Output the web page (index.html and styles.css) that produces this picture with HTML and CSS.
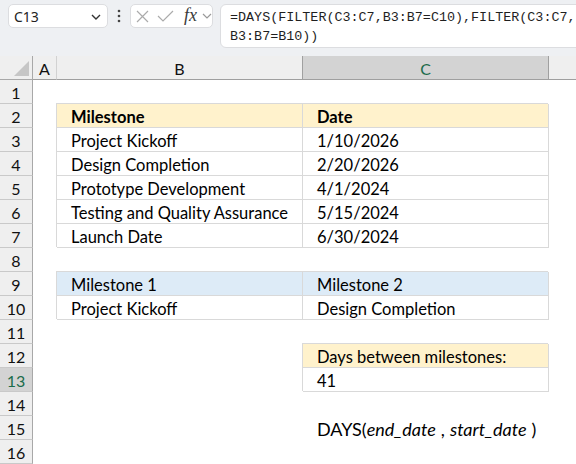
FILE: index.html
```html
<!DOCTYPE html>
<html>
<head>
<meta charset="utf-8">
<link rel="stylesheet" href="styles.css">
</head>
<body>
<div class="topbar">
  <div class="namebox">
    <span class="nb-text">C13</span>
    <svg class="chev" width="10" height="6" viewBox="0 0 10 6"><path d="M1 1 L5 5 L9 1" fill="none" stroke="#333" stroke-width="1.4"/></svg>
  </div>
  <div class="dots">
    <svg width="4" height="14" viewBox="0 0 4 14"><circle cx="2" cy="2" r="1.3" fill="#444"/><circle cx="2" cy="7" r="1.3" fill="#444"/><circle cx="2" cy="12" r="1.3" fill="#444"/></svg>
  </div>
  <div class="fxbox">
    <svg class="ic-x" width="13" height="13" viewBox="0 0 13 13"><path d="M1 1 L12 12 M12 1 L1 12" fill="none" stroke="#ababab" stroke-width="1.2"/></svg>
    <svg class="ic-check" width="17" height="12" viewBox="0 0 17 12"><path d="M1 6 L6 11 L16 1" fill="none" stroke="#ababab" stroke-width="1.2"/></svg>
    <span class="fx">fx</span>
    <svg class="chev2" width="10" height="6" viewBox="0 0 10 6"><path d="M1 1 L5 5 L9 1" fill="none" stroke="#9a9a9a" stroke-width="1.2"/></svg>
  </div>
  <div class="formula">=DAYS(FILTER(C3:C7,B3:B7=C10),FILTER(C3:C7,<br>B3:B7=B10))</div>
</div>

<div class="sheet">
  <div class="corner"><span class="tri"></span></div>
  <div class="ch">A</div>
  <div class="ch">B</div>
  <div class="ch sel">C</div>
  <div class="ch last"></div>

  <div class="rh">1</div><div></div><div></div><div></div><div></div>

  <div class="rh">2</div><div></div><div class="t y bold">Milestone</div><div class="t y bold">Date</div><div></div>
  <div class="rh">3</div><div></div><div class="t">Project Kickoff</div><div class="t">1/10/2026</div><div></div>
  <div class="rh">4</div><div></div><div class="t">Design Completion</div><div class="t">2/20/2026</div><div></div>
  <div class="rh">5</div><div></div><div class="t">Prototype Development</div><div class="t">4/1/2024</div><div></div>
  <div class="rh">6</div><div></div><div class="t">Testing and Quality Assurance</div><div class="t">5/15/2024</div><div></div>
  <div class="rh">7</div><div></div><div class="t">Launch Date</div><div class="t">6/30/2024</div><div></div>

  <div class="rh">8</div><div></div><div></div><div></div><div></div>

  <div class="rh">9</div><div></div><div class="t b">Milestone 1</div><div class="t b">Milestone 2</div><div></div>
  <div class="rh">10</div><div></div><div class="t">Project Kickoff</div><div class="t">Design Completion</div><div></div>

  <div class="rh">11</div><div></div><div></div><div></div><div></div>

  <div class="rh">12</div><div></div><div></div><div class="t y">Days between milestones:</div><div></div>
  <div class="rh sel">13</div><div></div><div></div><div class="t">41</div><div></div>

  <div class="rh">14</div><div></div><div></div><div></div><div></div>
  <div class="rh">15</div><div></div><div></div><div class="c syn">DAYS(<i>end_date</i><span class="sp">,</span><i>start_date</i><span class="sp">)</span></div><div></div>
  <div class="rh">16</div><div></div><div></div><div></div><div></div>
</div>
</body>
</html>
```
FILE: styles.css
```css
html, body {
  margin: 0;
  padding: 0;
  background: #ffffff;
}
body {
  width: 576px;
  height: 464px;
  overflow: hidden;
  font-family: Lato, "Liberation Sans", sans-serif;
}

/* ---------- top bar ---------- */
.topbar {
  height: 56px;
  box-sizing: border-box;
  background: #eef0f3;
  display: flex;
  align-items: flex-start;
  padding: 4px 0 0 8px;
  overflow: hidden;
}
.namebox {
  width: 100px;
  height: 24px;
  box-sizing: border-box;
  background: #fff;
  border: 1px solid #dcdde0;
  border-radius: 5px;
  display: flex;
  align-items: center;
  justify-content: space-between;
  padding: 0 6px 0 5px;
  flex: none;
}
.nb-text {
  font-family: "Noto Sans", "Open Sans", sans-serif;
  font-size: 14px;
  color: #222;
}
.chev { display: block; margin-top: 1px; }
.dots {
  width: 22px;
  height: 24px;
  display: flex;
  align-items: center;
  justify-content: center;
  flex: none;
}
.dots svg { display: block; }
.fxbox {
  width: 83px;
  height: 24px;
  box-sizing: border-box;
  background: #fff;
  border: 1px solid #dcdde0;
  border-radius: 5px;
  display: flex;
  align-items: center;
  padding-left: 5px;
  flex: none;
}
.fxbox svg { display: block; flex: none; }
.ic-check { margin-left: 8px; }
.fx {
  font-family: "Liberation Serif", serif;
  font-style: italic;
  font-size: 18px;
  color: #3a3a3a;
  margin-left: 10px;
  line-height: 1;
  margin-top: -2px;
}
.chev2 { margin-left: 5px; }
.formula {
  margin-left: 7px;
  width: 380px;
  height: 44px;
  box-sizing: border-box;
  background: #fff;
  border: 1px solid #dcdde0;
  border-radius: 6px;
  padding: 3px 0 0 9px;
  font-family: "Liberation Mono", monospace;
  font-size: 13.4px;
  line-height: 19px;
  color: #1f1f1f;
  white-space: nowrap;
  flex: none;
}

/* ---------- sheet ---------- */
.sheet {
  display: grid;
  grid-template-columns: 33px 24px 246px 246px 1fr;
  grid-auto-rows: 24px;
  font-size: 16.5px;
  color: #000;
}
.sheet > div {
  box-sizing: border-box;
  min-width: 0;
}
.corner {
  background: #efefef;
  border-right: 1px solid #a8a8a8;
  border-bottom: 1px solid #a8a8a8;
  position: relative;
}
.tri {
  position: absolute;
  right: 3px;
  bottom: 3px;
  width: 0;
  height: 0;
  border-left: 15px solid transparent;
  border-bottom: 15px solid #c6c6c6;
}
.ch {
  background: #efefef;
  border-right: 1px solid #d2d2d2;
  border-bottom: 1px solid #9f9f9f;
  display: flex;
  align-items: center;
  justify-content: center;
  padding-top: 1px;
  color: #111;
  font-size: 16px;
}
.ch.sel {
  background: #d3d3d3;
  color: #1b6b4a;
  border-right-color: #a0a0a0;
  border-left: 1px solid #a0a0a0;
  margin-left: -1px;
}
.ch.last { border-right: none; }
.rh {
  background: #efefef;
  border-right: 1px solid #a8a8a8;
  border-bottom: 1px solid #c9c9c9;
  display: flex;
  align-items: center;
  justify-content: center;
  padding-top: 1px;
  color: #111;
  font-size: 16px;
}
.rh.sel {
  background: #d3d3d3;
  color: #1b6b4a;
}

/* table cells */
.t, .c {
  display: flex;
  align-items: center;
  padding: 1px 0 0 14px;
  white-space: nowrap;
  overflow: hidden;
}
.t {
  background: #fff;
  box-shadow: -1px -1px 0 #d9d9d9, inset -1px -1px 0 #d9d9d9;
  overflow: visible;
}
.t.y { background: #fff2cc; }
.t.b { background: #ddebf7; }
.bold { font-weight: 700; }
.syn {
  font-size: 18px;
  overflow: visible;
}
.syn i { font-style: italic; }
.sp { margin-left: 5px; margin-right: 5px; }
```
